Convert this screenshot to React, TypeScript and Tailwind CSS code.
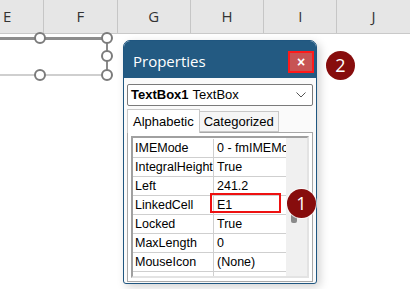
import React from "react";

const rows: [string, string][] = [
  ["IMEMode", "0 - fmIMEMode"],
  ["IntegralHeight", "True"],
  ["Left", "241.2"],
  ["LinkedCell", "E1"],
  ["Locked", "True"],
  ["MaxLength", "0"],
  ["MouseIcon", "(None)"],
  ["MousePointer", "0 - fmMousePointer"],
];

function Handle({ x, y }: { x: number; y: number }) {
  return (
    <div
      className="absolute w-[12px] h-[12px] rounded-full bg-white border-2 border-[#7b7b7b]"
      style={{ left: x - 6, top: y - 6 }}
    />
  );
}

function Badge({ n, x, y }: { n: string; x: number; y: number }) {
  return (
    <div
      className="absolute w-[29px] h-[29px] rounded-full bg-[#870d0d] ring-1 ring-white/70 flex items-center justify-center text-white text-[18px] font-['Open_Sans',sans-serif]"
      style={{ left: x - 14, top: y - 14 }}
    >
      {n}
    </div>
  );
}

export default function App() {
  const cols = ["E", "F", "G", "H", "I", "J"];
  return (
    <div className="relative w-[410px] h-[289px] overflow-hidden bg-white font-['Liberation_Sans',sans-serif]">
      {/* column header */}
      <div className="flex h-[34px] bg-[#e6e6e6] border-b border-[#c9c9c9] ml-[-29px]">
        {cols.map((c) => (
          <div
            key={c}
            className="w-[73.3px] shrink-0 border-r border-[#c6c6c6] flex items-center justify-center text-[15px] text-[#333] font-['Open_Sans',sans-serif]"
          >
            {c}
          </div>
        ))}
      </div>

      {/* textbox shape on sheet */}
      <div className="absolute left-[-10px] top-[37px] w-[118px] h-[39px] border-t-[3px] border-t-[#8d8d8d] border-r-2 border-r-[#8a8a8a] border-b-2 border-b-[#cfcfcf]" />
      <Handle x={40} y={38} />
      <Handle x={107} y={38} />
      <Handle x={107} y={56} />
      <Handle x={40} y={75} />
      <Handle x={107} y={75} />

      {/* properties window */}
      <div className="absolute left-[123px] top-[40px] w-[194px] h-[244px] rounded-t-[7px] rounded-b-[3px] bg-[#fafafa] border border-[#1f5680] shadow-[3px_3px_10px_rgba(0,0,0,0.18)] flex flex-col">
        <div className="h-[37px] bg-[#235a82] rounded-t-[6px] flex items-center justify-between pl-[9px] pr-[2px]">
          <span className="text-white text-[15px] font-['Open_Sans',sans-serif] mt-[3px]">Properties</span>
          <div className="w-[26px] h-[22px] mt-[4px] border-2 border-[#ff1a1a] bg-[#c75454] flex items-center justify-center text-white text-[14px] font-bold leading-none">
            ×
          </div>
        </div>

        <div className="px-[3px] pt-[6px] flex flex-col">
          <div className="h-[22px] border border-[#7a7a7a] rounded-[2px] bg-white flex items-center px-[3px] text-[13px] text-black">
            <span className="font-bold">TextBox1</span>
            <span className="ml-[4px]">TextBox</span>
            <svg className="ml-auto mr-[3px]" width="10" height="6" viewBox="0 0 10 6">
              <path d="M0.5 0.5 L5 5 L9.5 0.5" fill="none" stroke="#555" strokeWidth="1" />
            </svg>
          </div>

          <div className="flex items-end mt-[2px] text-[13px] text-black h-[24px]">
            <div className="h-[24px] px-[5px] bg-white border border-b-0 border-[#c8c8c8] flex items-center relative z-10 -mb-px">
              Alphabetic
            </div>
            <div className="h-[21px] px-[4px] bg-[#f5f5f5] border border-l-0 border-[#c8c8c8] flex items-center">
              Categorized
            </div>
          </div>

          <div className="h-[150px] border border-[#a8a8a8] bg-white p-[3px]">
            <div className="h-full border-2 border-t-[#a0a0a0] border-l-[#a0a0a0] border-r-[#e3e3e3] border-b-[#e3e3e3] flex overflow-hidden">
              <div className="flex-1 min-w-0 flex flex-col pt-[1px] text-[12.5px] text-black">
                {rows.map(([k, v]) => (
                  <div key={k} className="flex h-[19px] shrink-0 border-b border-[#cfcfcf]">
                    <div className="w-[81px] shrink-0 border-r border-[#cfcfcf] pl-[2px] flex items-center whitespace-nowrap overflow-hidden">
                      {k}
                    </div>
                    <div className="flex-1 min-w-0 pl-[3px] flex items-center whitespace-nowrap overflow-hidden">
                      {v}
                    </div>
                  </div>
                ))}
              </div>
              <div className="w-[21px] shrink-0 bg-[#f0f0f0] relative">
                <div className="absolute left-[5px] top-[68px] w-[6px] h-[17px] rounded-[2px] bg-[#8a8a8a]" />
              </div>
            </div>
          </div>
        </div>
      </div>

      {/* highlight on LinkedCell value */}
      <div className="absolute left-[210px] top-[193px] w-[71px] h-[20px] border-2 border-[#ee1111]" />

      <Badge n="2" x={340} y={65} />
      <Badge n="1" x={301} y={203} />
    </div>
  );
}
